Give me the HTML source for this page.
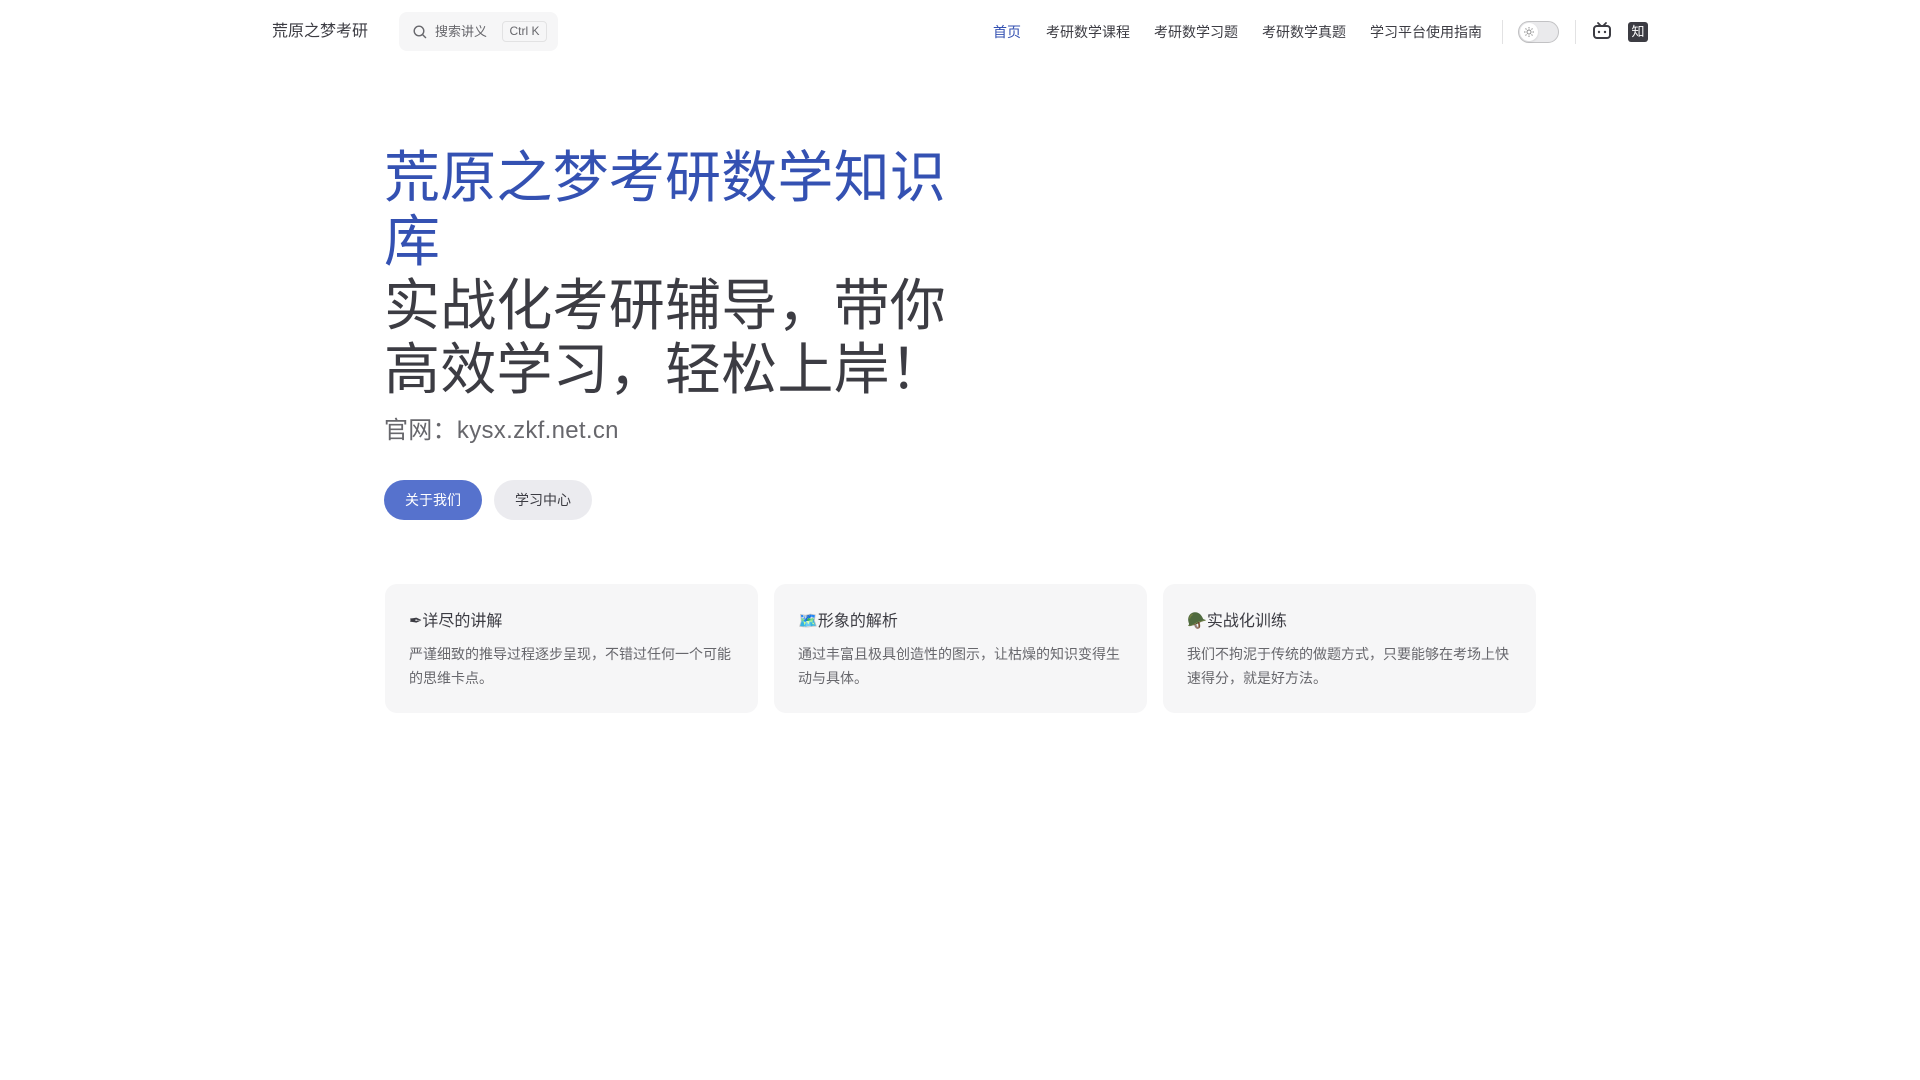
<!DOCTYPE html>
<html><head><meta charset="utf-8"><style>
*{margin:0;padding:0;box-sizing:border-box}
body{width:1920px;height:1080px;background:#fff;font-family:"Liberation Sans","Noto Sans CJK SC",sans-serif;color:#3c3c43;position:relative;overflow:hidden}
.abs{position:absolute}
.logo{left:272px;top:20px;font-size:16px;line-height:24px;color:#3c3c43}
.search{left:399px;top:12px;width:159px;height:39px;background:#f6f6f7;border-radius:8px}
.search .t{position:absolute;left:36px;top:11px;font-size:13px;color:#67676c;line-height:17px}
.search .k{position:absolute;left:103px;top:9px;width:45px;height:21px;border:1px solid #e2e2e3;border-radius:4px;font-size:12px;line-height:19px;text-align:center;color:#67676c}
.nav{top:20px;font-size:14px;line-height:24px;color:#3c3c43}
.div{top:20px;width:1px;height:24px;background:#e2e2e3}
.tog{left:1518px;top:21px;width:41px;height:22px;border:1px solid #c2c2c4;border-radius:11px;background:#eaeaec}
.tog i{position:absolute;left:1px;top:1px;width:18px;height:18px;border-radius:50%;background:#fff;box-shadow:0 1px 2px rgba(0,0,0,.1)}
.h1{left:384px;top:146px;font-size:56px;line-height:64px;font-weight:400;width:620px;letter-spacing:0.2px}
.tag{left:384px;top:413px;font-size:24px;line-height:36px;color:#67676c;letter-spacing:0.3px}
.btn{top:480px;height:40px;border-radius:20px;font-size:14px;line-height:40px;text-align:center;width:98px}
.card{top:584px;width:373px;height:129px;background:#f6f6f7;border-radius:12px;padding:25px 24px}
.card h3{font-size:16px;line-height:24px;font-weight:400;color:#3c3c43;margin-top:1px}
.card p{font-size:14px;line-height:24px;color:#67676c;margin-top:8px}
</style></head><body>
<div class="abs logo">荒原之梦考研</div>
<div class="abs search">
<svg style="position:absolute;left:14px;top:13px" width="14" height="14" viewBox="0 0 14 14"><circle cx="6" cy="6" r="4.8" fill="none" stroke="#67676c" stroke-width="1.4"/><path d="M9.6 9.6L12.6 12.6" stroke="#67676c" stroke-width="1.4" stroke-linecap="round"/></svg>
<div class="t">搜索讲义</div><div class="k">Ctrl K</div></div>
<div class="abs nav" style="left:993px;color:#3451b2">首页</div>
<div class="abs nav" style="left:1046px">考研数学课程</div>
<div class="abs nav" style="left:1154px">考研数学习题</div>
<div class="abs nav" style="left:1262px">考研数学真题</div>
<div class="abs nav" style="left:1370px">学习平台使用指南</div>
<div class="abs div" style="left:1502px"></div>
<div class="abs tog"><i></i><svg style="position:absolute;left:5px;top:5px" width="10" height="10" viewBox="0 0 10 10"><circle cx="5" cy="5" r="2" fill="none" stroke="#888" stroke-width=".9"/><path d="M5 0v1.5M5 8.5V10M0 5h1.5M8.5 5H10M1.5 1.5l1 1M7.5 7.5l1 1M1.5 8.5l1-1M7.5 2.5l1-1" stroke="#888" stroke-width=".9"/></svg></div>
<div class="abs div" style="left:1575px"></div>
<svg class="abs" style="left:1592px;top:21px" width="20" height="20" viewBox="0 0 20 20"><path d="M6 2l3 3M14 2l-3 3" stroke="#3c3c43" stroke-width="1.8" stroke-linecap="round"/><rect x="2" y="5" width="16" height="12" rx="3" fill="none" stroke="#3c3c43" stroke-width="2"/><circle cx="7" cy="11" r="1.2" fill="#3c3c43"/><circle cx="13" cy="11" r="1.2" fill="#3c3c43"/></svg>
<div class="abs" style="left:1628px;top:22px;width:20px;height:20px;background:#3c3c43;border-radius:3px;color:#fff;font-size:13px;line-height:20px;text-align:center">知</div>
<div class="abs h1"><span style="color:#3451b2">荒原之梦考研数学知识<br>库</span><br>实战化考研辅导，带你<br>高效学习，轻松上岸！</div>
<div class="abs tag">官网：kysx.zkf.net.cn</div>
<div class="abs btn" style="left:384px;background:#5672cd;color:#fff">关于我们</div>
<div class="abs btn" style="left:494px;background:#ebebef;color:#3c3c43">学习中心</div>
<div class="abs card" style="left:385px"><h3>✒详尽的讲解</h3><p>严谨细致的推导过程逐步呈现，不错过任何一个可能的思维卡点。</p></div>
<div class="abs card" style="left:774px"><h3>🗺️形象的解析</h3><p>通过丰富且极具创造性的图示，让枯燥的知识变得生动与具体。</p></div>
<div class="abs card" style="left:1163px"><h3>🪖实战化训练</h3><p>我们不拘泥于传统的做题方式，只要能够在考场上快速得分，就是好方法。</p></div>
</body></html>
